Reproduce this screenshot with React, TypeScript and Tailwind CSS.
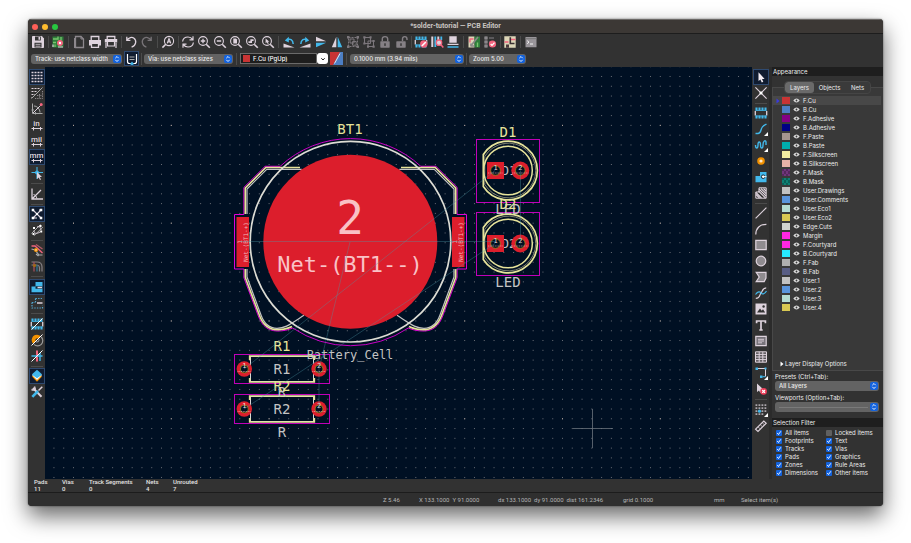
import { Fragment, type ReactNode } from "react";

const L = "#ded3dd";
const B = "#42b8eb";
const R = "#f2647e";
const O = "#f29100";

function Svg({ children }: { children: ReactNode }) {
  return (
    <svg viewBox="0 0 16 16" className="h-4 w-4 shrink-0" fill="none" stroke={L} strokeWidth="1" aria-hidden="true">
      {children}
    </svg>
  );
}

const lens = (
  <>
    <circle cx="7" cy="7" r="4.4" strokeWidth="1.1" />
    <path d="M10.2 10.2 13.8 13.8" strokeWidth="1.6" />
  </>
);

const footprint = (
  <>
    <path d="M2.3 6V10.5M13.7 6V10.5" strokeWidth="1.3" />
    <path d="M2.5 5.5H13.5M2.5 11H13.5" stroke={B} strokeWidth="0.8" />
    <path d="M3.5 2.6V5.6M6.5 2.6V5.6M9.5 2.6V5.6M12.5 2.6V5.6M3.5 10.6V13.6M6.5 10.6V13.6M9.5 10.6V13.6M12.5 10.6V13.6" stroke={B} strokeWidth="2.1" />
  </>
);

const corner = <path d="M15 11V15H11Z" fill="#fff" stroke="none" />;

const padlock = (
  <g fill="#858085" stroke="none">
    <rect x="3.3" y="7.3" width="9.4" height="6.4" rx="0.6" />
    <rect x="7.3" y="9.3" width="1.4" height="2.6" fill="#323232" />
  </g>
);

const icons: Record<string, ReactNode> = {
  save: (
    <>
      <path d="M2.5 2.5H11.8L13.5 4.2V13.5H2.5Z" fill={L} />
      <path d="M5 2.5H10.8V6.5H5ZM4.5 8.7H11.5V13.5H4.5Z" fill="#323232" stroke="none" />
      <path d="M8.5 3H10V5.8H8.5Z" fill={L} stroke="none" />
      <path d="M5.5 10.3H10.5M5.5 12.2H10.5" strokeWidth="0.8" />
    </>
  ),
  board: (
    <>
      <rect x="2.5" y="2.5" width="11" height="11" fill="#2f7d3b" stroke="none" />
      <path d="M3 5H8V2.5M3 8.5H6M5 13V10.5M11 3V6" stroke="#77c66e" strokeWidth="1.3" />
      <circle cx="10" cy="9" r="3" fill={R} stroke="none" />
      <circle cx="10" cy="9" r="1.2" fill="#fff" stroke="none" />
      <path d="M8 13H13M3 10.5V13" stroke={L} strokeWidth="1.2" />
    </>
  ),
  page: (
    <>
      <path d="M4.5 2.5H10L12.5 5V13.5H4.5Z" stroke="#8d888d" strokeWidth="1.3" />
      <path d="M10 2.5V5H12.5M3.5 4V14" stroke="#8d888d" />
    </>
  ),
  print: (
    <>
      <path d="M4.2 6V2.5H11.8V6" strokeWidth="1.3" />
      <path d="M2 6H14V11.5H2Z" fill={L} stroke="none" />
      <path d="M4.5 9.3H11.5V13.3H4.5Z" fill="#323232" strokeWidth="1.3" />
    </>
  ),
  plot: (
    <>
      <path d="M4.2 5V2.5H11.8V5" strokeWidth="1.3" />
      <path d="M1.8 5H14.2V8.5H1.8Z" fill={L} stroke="none" />
      <path d="M4.5 7.5H11.5V12H4.5Z" fill="#323232" strokeWidth="1.2" />
      <path d="M3 9V14M13 9V14" strokeWidth="1.2" />
    </>
  ),
  undo: <path d="M3.8 2.8V6.3H7.4M4 6.2C6 3.2 9 2.8 11 4.2C13.8 6.5 13.3 11.5 8.6 13.2" strokeWidth="1.3" />,
  redo: <path d="M12.2 2.8V6.3H8.6M12 6.2C10 3.2 7 2.8 5 4.2C2.2 6.5 2.7 11.5 7.4 13.2" strokeWidth="1.3" stroke="#777377" />,
  find: (
    <>
      <circle cx="9" cy="7" r="4.6" strokeWidth="1.1" />
      <path d="M5.8 10.2 2.4 13.6" strokeWidth="1.6" />
      <path d="M7.2 9.4 9 4.6 10.8 9.4M7.8 7.9H10.2" strokeWidth="1.2" />
    </>
  ),
  refresh: <path d="M2.6 7.5C3 4.5 5.5 3 8 3C10 3 11.6 3.9 12.6 5.4M13 2.2V5.8H9.5M13.4 8.5C13 11.5 10.5 13 8 13C6 13 4.4 12.1 3.4 10.6M3 13.8V10.2H6.5" strokeWidth="1.2" />,
  zoomIn: (
    <>
      {lens}
      <path d="M4.8 7H9.2M7 4.8V9.2" strokeWidth="1.3" />
    </>
  ),
  zoomOut: (
    <>
      {lens}
      <path d="M4.8 7H9.2" strokeWidth="1.3" />
    </>
  ),
  zoomPage: (
    <>
      {lens}
      <path d="M5.3 4.5H8L9 5.5V9.5H5.3Z" fill={L} stroke="none" />
    </>
  ),
  zoomObjects: (
    <>
      {lens}
      <path d="M4.5 8.2H7.2V6.2H9.6" strokeWidth="1.7" />
    </>
  ),
  zoomArea: (
    <>
      {lens}
      <path d="M5.6 4.4V9.2L6.8 8.2 7.8 10 8.8 9.4 7.8 7.8H9.4Z" fill={L} stroke="none" />
    </>
  ),
  rotateLeft: (
    <>
      <path d="M2.5 9.5 13.5 13.5H2.5Z" fill={L} stroke="none" />
      <path d="M6 5.8C9 4.2 12 5.8 12.2 10" stroke={B} strokeWidth="1.5" />
      <path d="M7.8 2.8V8.4L3.8 6.4Z" fill={B} stroke="none" />
    </>
  ),
  rotateRight: (
    <>
      <path d="M13.5 9.5 2.5 13.5H13.5Z" fill={L} stroke="none" />
      <path d="M10 5.8C7 4.2 4 5.8 3.8 10" stroke={B} strokeWidth="1.5" />
      <path d="M8.2 2.8V8.4L12.2 6.4Z" fill={B} stroke="none" />
    </>
  ),
  flipVertical: (
    <>
      <path d="M3 2.8 13.2 7.2H3Z" fill={L} stroke="none" />
      <path d="M3 13.2 13.2 8.8H3Z" fill={B} stroke="none" />
    </>
  ),
  mirror: (
    <>
      <path d="M7.3 2.8V13.3H2.8Z" fill={L} stroke="none" />
      <path d="M8.7 2.8V13.3H13.2Z" fill={B} stroke="none" />
    </>
  ),
  group: (
    <g stroke="#7c777c">
      <path d="M3.5 3.5H12.5V12.5H3.5Z" strokeDasharray="2 1" />
      <path d="M5 5H9V9H5ZM7.5 7.5H11.2V11.2H7.5Z" />
      <path d="M2 2H4.5V4.5H2ZM11.5 2H14V4.5H11.5ZM2 11.5H4.5V14H2ZM11.5 11.5H14V14H11.5Z" fill="#7c777c" stroke="none" />
    </g>
  ),
  ungroup: (
    <g stroke="#7c777c">
      <path d="M3.5 3.5H9.5V9.5H3.5ZM7 7H12.5V12.5H7Z" />
      <path d="M2.3 2.3H4.5V4.5H2.3ZM8.5 2.3H10.6V4.5H8.5ZM2.3 8.5H4.5V10.6H2.3ZM11.5 11.5H13.7V13.7H11.5ZM11.5 6H13.7V8H11.5ZM6 11.5H8V13.7H6Z" fill="#7c777c" stroke="none" />
    </g>
  ),
  lock: (
    <>
      {padlock}
      <path d="M5.3 7.3V5C5.3 1.8 10.7 1.8 10.7 5V7.3" stroke="#858085" strokeWidth="1.4" />
    </>
  ),
  unlock: (
    <>
      {padlock}
      <path d="M9.5 7.3V5C9.5 1.8 14 1.8 14 5V6" stroke="#858085" strokeWidth="1.4" />
    </>
  ),
  footprintEditor: (
    <>
      {footprint}
      <circle cx="10.8" cy="10" r="3.7" fill={R} stroke="none" />
      <path d="M8.8 12 12.8 8" stroke="#fff" strokeWidth="1.6" />
    </>
  ),
  footprintBrowser: (
    <>
      <path d="M3.3 2.5V13M9.3 2.5V6" strokeWidth="2" />
      <path d="M6.3 2.5V13M12.3 2.5V6" stroke={B} strokeWidth="1.8" />
      <circle cx="10" cy="8.7" r="2.7" stroke={R} strokeWidth="1.3" fill={L} />
      <path d="M12 10.8 14.3 13.5" stroke={R} strokeWidth="1.6" />
    </>
  ),
  update: (
    <>
      <path d="M4.3 2.3H11.7V8.7H4.3Z" fill={L} stroke="none" />
      <path d="M2.5 10.3H13.5" strokeWidth="1.3" />
      <path d="M2.5 13H13.5" stroke={B} strokeWidth="1.6" />
    </>
  ),
  updatePcb: (
    <>
      <path d="M2.5 2.5H8.5V13.5H2.5Z" fill="#dcd6b8" stroke="none" />
      <path d="M8.5 2.5H14V13.5H8.5Z" fill="#2f7d3b" stroke="none" />
      <path d="M4 5H7.5M4 4.5V8.5" stroke={R} strokeWidth="1.4" />
      <path d="M12 3 5.5 11M5 12.5V9.5M5 12H8.5" stroke="#888" strokeWidth="1.7" />
      <path d="M11.5 8.5V13" stroke="#77c66e" strokeWidth="1.4" />
    </>
  ),
  drc: (
    <>
      <path d="M3 3H5V5H3ZM3 7H5V9H3ZM3 11H5V13H3Z" stroke="#a5a0a5" strokeWidth="1.1" />
      <path d="M7 4H12M7 8H9" stroke="#858085" />
      <circle cx="10.5" cy="10" r="3.6" fill={R} stroke="none" />
      <path d="M8.7 10 10 11.4 12.5 8.6" stroke="#fff" strokeWidth="1.3" />
    </>
  ),
  schematic: (
    <>
      <path d="M2.3 2.3H13.7V13.7H2.3Z" fill="#dcd6b8" stroke="none" />
      <path d="M2.5 8H6.5M8.5 5.5H13.5" stroke={R} strokeWidth="1.4" />
      <path d="M8.3 3.2V9.5H12.5" stroke="#3a3032" strokeWidth="1.6" />
      <path d="M4 10.5H7V13.7H4Z" fill="#4a3a3c" stroke="none" />
    </>
  ),
  console: (
    <>
      <path d="M2.5 3H13.5V13.2H2.5Z" fill="#99959a" stroke="none" />
      <path d="M2.5 4.7H13.5" stroke="#777" />
      <path d="M4.2 6.7 6 8.2 4.2 9.7M7 10H10" stroke="#fff" strokeWidth="0.9" />
    </>
  ),
  grid: <path d="M2.5 3.5H14M2.5 6.5H14M2.5 9.5H14M2.5 12.5H14" strokeDasharray="2 1" strokeWidth="1.3" />,
  gridOverrides: (
    <>
      <path d="M2.5 3.5H11M2.5 6.5H8.5M2.5 9.5H6M2.5 12.5H4" strokeDasharray="2 1" strokeWidth="1.2" />
      <path d="M2.5 13.5 13.5 2.5" stroke="#aaa" />
      <path d="M13.5 6V13.5H6M10.5 9V13M8 10.5H13" stroke="#8d888d" strokeDasharray="1.3 1" />
    </>
  ),
  polar: (
    <>
      <path d="M3.5 2.5V12.5H13.5M2.5 9H5M6.5 11V13.5" stroke="#aaa" />
      <path d="M4 12 12 4" stroke={L} />
      <path d="M5 5C8 5 11 8 11 11.5" stroke="#aaa" />
      <circle cx="12.2" cy="3.6" r="1.5" fill={R} stroke="none" />
    </>
  ),
  crosshair: (
    <>
      <path d="M8 2V14M2.5 7.5H14" stroke={B} strokeWidth="1.1" />
      <circle cx="8" cy="7.5" r="2" fill={B} stroke="none" />
      <path d="M8 7V14L9.7 12.4 11 15 12 14.4 10.8 12H13Z" fill={L} stroke="none" />
    </>
  ),
  angle: (
    <>
      <path d="M3 2.5V13H14M3 13 12 4" strokeWidth="1.3" />
      <path d="M4.5 8.5C6.5 9 7.5 10.5 7.8 12.5" />
    </>
  ),
  ratsnest: (
    <>
      <path d="M4 4 12 12M4 12 12 4M4 12H8M10 4H12" strokeWidth="1.1" />
      <path d="M2.7 2.7H5.2V5.2H2.7ZM10.8 2.7H13.3V5.2H10.8ZM2.7 10.8H5.2V13.3H2.7ZM10.8 10.8H13.3V13.3H10.8ZM7 7H9V9H7Z" fill="#fff" stroke="none" />
    </>
  ),
  ratsnestCurved: (
    <>
      <path d="M2.5 11.5 11.5 2.5M5 13.8 13.8 5" stroke="#aaa" />
      <path d="M5 8.5C5 12 8 12 11 10M8 5C11 4 12 6 12 8" />
      <path d="M4 5H6V7H4ZM3.5 11H5.5V13H3.5ZM11.2 8.5H13.2V10.5H11.2ZM10.5 3H12.5V5H10.5Z" fill="#fff" stroke="none" />
    </>
  ),
  netHighlight: (
    <>
      <path d="M2.5 4H6L13.5 11" stroke={R} strokeWidth="1.4" />
      <path d="M7 2.5 13.5 7" stroke="#b85a68" strokeWidth="1.2" />
      <path d="M2.5 7 6 8 10 13H13.5M7 12 9.5 14" stroke="#aaa" strokeWidth="1.2" />
      <circle cx="7" cy="8" r="2" fill={O} stroke="none" />
      <circle cx="7" cy="8" r="0.7" fill="#fff" stroke="none" />
    </>
  ),
  netColor: (
    <>
      <path d="M2.5 4H8C11 4 13 6 13 9V13.5M2.5 7H7C9 7 10.5 8 10.5 10V13.5" stroke="#858085" strokeWidth="1.2" />
      <path d="M5 4V13.5" stroke="#a2505c" strokeWidth="1.3" />
      <path d="M8 7V13.5" stroke="#2f7590" strokeWidth="1.3" />
      <circle cx="5.5" cy="7.5" r="1.6" fill="#a46a15" stroke="none" />
    </>
  ),
  zoneFill: (
    <>
      <path d="M6.5 3H13.5V13.3H2.5V7.5H6.5Z" fill={B} stroke="none" />
      <path d="M6.5 8.5H13.5" stroke="#10283c" strokeWidth="2.4" />
      <path d="M8.5 8.5H13" stroke={L} strokeWidth="1.4" />
    </>
  ),
  zoneOutline: (
    <>
      <path d="M6.5 3.5H13M3 7.5H6.5M3 7.5V13H13.5V10.5M6.5 3.5V7" stroke="#52a6cf" strokeWidth="1.2" strokeDasharray="1.4 1.2" />
      <path d="M8 8H13.5" stroke={L} strokeWidth="1.6" />
    </>
  ),
  fpOutline: (
    <>
      {footprint}
      <path d="M2.5 13.5 13.5 2.5" stroke="#fff" />
    </>
  ),
  padOutline: (
    <>
      <path d="M8 2.8A5.2 5.2 0 0 0 4.3 11.7L6.8 9.2A1.7 1.7 0 0 1 9.2 6.8L11.7 4.3A5.2 5.2 0 0 0 8 2.8Z" fill={O} stroke="none" />
      <path d="M12.2 5A5 5 0 0 1 5 12.4M9.8 7.2A2 2 0 0 1 7.2 9.8" stroke="#999" strokeWidth="1.2" />
      <path d="M2.5 13.5 13.5 2.5" stroke="#fff" />
    </>
  ),
  trackOutline: (
    <>
      <path d="M8 2.5V13.5" stroke={R} strokeWidth="2" />
      <path d="M2.5 8H13.5M11 5V13" stroke={B} strokeWidth="1.4" />
      <path d="M2.5 13.5 13.5 2.5" stroke="#fff" />
    </>
  ),
  layers: (
    <>
      <path d="M3 8.5 8 13.8 13 8.5 8 5Z" fill={O} stroke="none" />
      <path d="M3 7 8 12 13 7 8 4Z" fill="#fff" stroke="none" />
      <path d="M3.3 6 8 1.8 12.7 6V7L8 10.2 3.3 7Z" fill={B} stroke="none" />
    </>
  ),
  tools: (
    <>
      <path d="M4 4 12.5 12.8" strokeWidth="2" />
      <path d="M2.5 5.5C5.5 7 7 5.5 5.5 2.5" strokeWidth="1.5" />
      <path d="M13.3 2.7 9.5 6.5" strokeWidth="1.5" />
      <path d="M9 7 3.3 12.8" stroke={B} strokeWidth="2.6" />
    </>
  ),
  select: <path d="M5.5 3.2V12L7.4 10.4 8.8 13.4 10.3 12.7 9 9.9H11.6Z" fill="#f3edf3" stroke="none" />,
  localRats: (
    <>
      <path d="M2.4 2.4 13.6 13.6M2.4 13.6 13.6 2.4" strokeWidth="1.2" />
      <rect x="6.6" y="6.6" width="2.8" height="2.8" fill="#fff" stroke="none" />
    </>
  ),
  footprint,
  route: (
    <>
      <path d="M2.5 12.5H5C8 12.5 7.5 9 9 6.5C10 4.5 11.5 4.5 13.5 3" stroke={B} strokeWidth="1.4" />
      {corner}
    </>
  ),
  tune: (
    <>
      <path d="M2.5 8C2.5 12 5 12 5 8S7.5 4 7.5 8 10 12 10 8 12.5 2.5 13 5V8" stroke={B} strokeWidth="1.4" />
      {corner}
    </>
  ),
  via: <circle cx="8" cy="8" r="2.7" stroke={O} strokeWidth="2.2" fill="#ffe9cc" />,
  zone: (
    <>
      <path d="M7 3H13.5V13.3H2.5V7H7Z" fill={B} stroke="none" />
      <circle cx="10.2" cy="7.7" r="1.8" fill="#fff" stroke="#1d2a33" />
      <path d="M11 7.7H13.5" stroke="#fff" />
    </>
  ),
  ruleArea: (
    <>
      <path d="M6 2.8H13.2V13.2H2.8V7H6Z" />
      <path d="M3 9.5 6.5 13M3 7.5 8.5 13M5.5 6 12.5 13M6 4 13 11M8 3.5 13 8.5M10.5 3.5 13 6" strokeWidth="1.1" />
    </>
  ),
  line: <path d="M2.6 13.4 13.4 2.6" strokeWidth="1.2" />,
  arc: <path d="M2.8 13.4C2.8 7 7 3.3 13.4 3.3" strokeWidth="1.2" />,
  rect: <path d="M2.8 3.3H13.2V12.7H2.8Z" fill="#8f8b8f" strokeWidth="1.2" />,
  circle: <circle cx="8" cy="8" r="4.8" fill="#8f8b8f" strokeWidth="1.2" />,
  polygon: <path d="M3.2 3.3H13V9L11.2 12.6H3.2L6.2 8Z" fill="#8f8b8f" strokeWidth="1.2" />,
  bezier: (
    <>
      <path d="M2.8 13.3C7.5 13.3 6.5 9 8 8S9 2.8 13.2 2.8" strokeWidth="1.2" />
      <path d="M2.5 9.5C5 6 7 6.5 8 8S11.5 9.5 13.5 6" stroke={B} strokeWidth="1.2" />
    </>
  ),
  image: (
    <>
      <path d="M2.5 2.5H13.5V13.5H2.5Z" fill={L} stroke="none" />
      <path d="M4 11.5 7 7.5 8.7 9.7 10 8.3 12.2 11.5Z" fill="#323232" stroke="none" />
      <circle cx="10.6" cy="5.5" r="1.2" fill="#323232" stroke="none" />
    </>
  ),
  text: <path d="M3.3 4H12.7M8 4V13.5M3.6 3.2V6.2M12.4 3.2V6.2M6.3 13H9.7" strokeWidth="1.7" />,
  textbox: (
    <>
      <path d="M2.8 3.3H13.2V12.7H2.8Z" fill="#77737a" strokeWidth="1.2" />
      <path d="M5 6.3H11M5 8H11M5 9.8H9" strokeWidth="0.9" />
    </>
  ),
  table: <path d="M2.5 2.8H13.5V13.2H2.5ZM2.5 5.4H13.5M2.5 8H13.5M2.5 10.6H13.5M6.2 2.8V13.2M9.8 2.8V13.2" fill="#5a575a" strokeWidth="1" />,
  dimension: (
    <>
      <path d="M3.5 3.5H12.5V11.5M3.5 3.5V5" strokeWidth="1" />
      <path d="M2.5 2.5H5V5H2.5ZM7 10.5H9.5V13H7ZM11.5 2.5H13.5V4.5H11.5Z" fill={B} stroke="none" />
      <path d="M9.5 11.7H12.5" stroke={B} />
      {corner}
    </>
  ),
  delete: (
    <>
      <path d="M4 2.5V11L6 9.5 7.5 12.3 8.5 8.5H10.5Z" fill={L} stroke="none" />
      <circle cx="10.6" cy="10.4" r="3.3" fill="#ed3b57" stroke="none" />
      <path d="M9.2 9 12 11.8M12 9 9.2 11.8" stroke="#fff" strokeWidth="1.2" />
    </>
  ),
  gridOrigin: (
    <>
      <path d="M2.5 3.2H14M2.5 6.2H14M2.5 9.2H14M2.5 12.2H11" strokeWidth="1.8" strokeDasharray="1.8 1.2" stroke="#aba5ab" />
      <circle cx="6.5" cy="9.2" r="1.6" fill={B} stroke="none" />
      {corner}
    </>
  ),
  ruler: (
    <>
      <path d="M2.6 11.2 10.8 3 13.2 5.2 5 13.4Z" strokeWidth="1.2" />
      <path d="M5.2 9 6.7 10.4M7.4 6.8 8.8 8.2M9.4 4.8 10.8 6.2" strokeWidth="0.9" />
    </>
  ),
};

// "|" is a narrow divider, "||" a one pixel wider one
const topTools = "save | board || page print plot | undo redo || find | refresh zoomIn zoomOut zoomPage zoomObjects zoomArea || rotateLeft rotateRight flipVertical mirror group ungroup lock unlock | footprintEditor footprintBrowser update || updatePcb drc | schematic || console".split(" ");
const leftTools = "grid gridOverrides polar unit-in unit-mil unit-mm crosshair || angle | ratsnest ratsnestCurved | netHighlight netColor || zoneFill zoneOutline || fpOutline padOutline trackOutline | layers tools".split(" ");
const rightTools = "select localRats | footprint route tune via zone ruleArea | line arc rect circle polygon bezier image text textbox table dimension delete || gridOrigin ruler".split(" ");
const active = new Set(["grid", "unit-mm", "ratsnest", "zoneFill", "layers", "select"]);

function Tool({ name }: { name: string }) {
  const unit = name.startsWith("unit-") ? name.slice(5) : null;
  return (
    <button
      type="button"
      aria-label={name}
      className={`flex h-4 w-4 shrink-0 items-center justify-center ${active.has(name) ? "bg-[#101c30] outline outline-1 -outline-offset-1 outline-[#2f4a70]" : ""}`}
    >
      {unit ? (
        <span className="flex flex-col items-center text-[8px] leading-[7px] font-medium text-[#ded3dd]">
          {unit}
          <svg viewBox="0 0 12 4" className="h-1 w-3" stroke={L} fill="none" aria-hidden="true">
            <path d="M0.5 1.5H11.5M2.5 0V3.5M9.5 0V3.5" />
          </svg>
        </span>
      ) : (
        <Svg>{icons[name]}</Svg>
      )}
    </button>
  );
}

function VTools({ items }: { items: string[] }) {
  return (
    <>
      {items.map((t, i) =>
        t[0] === "|" ? (
          <div key={i} className={`flex w-full shrink-0 items-center justify-center ${t === "|" ? "h-1" : "h-[5px]"}`}>
            <div className="h-px w-3 bg-[#4b4b4b]" />
          </div>
        ) : (
          <Tool key={i} name={t} />
        ),
      )}
    </>
  );
}

function VLine({ wide }: { wide?: boolean }) {
  return <div className={`h-3 w-px shrink-0 bg-[#4b4b4b] ${wide ? "mx-[3px]" : "mx-[2px]"}`} />;
}

function Select({ label, value, width, id }: { label?: string; value: string; width: string; id?: string }) {
  return (
    <div className={`relative h-[10px] shrink-0 ${width}`}>
      <select
        id={id}
        aria-label={label}
        className="block h-full w-full appearance-none rounded-[3px] bg-[#636363] px-1 font-['Inter',sans-serif] text-[6px] leading-[10px] font-medium text-[#ececec]"
      >
        <option>{value}</option>
      </select>
      {!value && <div className="pointer-events-none absolute top-[5px] right-[11px] left-1 h-px bg-[#7a7a7a]" />}
      <svg viewBox="0 0 8 8" className="pointer-events-none absolute top-px right-px h-2 w-2" aria-hidden="true">
        <rect width="8" height="8" rx="2" fill="#1463dd" />
        <path d="M2.3 3.2 4 1.5 5.7 3.2M2.3 4.8 4 6.5 5.7 4.8" fill="none" stroke="#fff" strokeWidth="0.9" />
      </svg>
    </div>
  );
}

const layers: [string, string][] = [
  ["F.Cu", "#c83434"],
  ["B.Cu", "#4d7fc4"],
  ["F.Adhesive", "#840084"],
  ["B.Adhesive", "#000084"],
  ["F.Paste", "#a5958f"],
  ["B.Paste", "#00adad"],
  ["F.Silkscreen", "#f2eda1"],
  ["B.Silkscreen", "#e8b2a7"],
  ["F.Mask", "#70367b"],
  ["B.Mask", "#0e8074"],
  ["User.Drawings", "#c2c2c2"],
  ["User.Comments", "#5994dc"],
  ["User.Eco1", "#b4dbd2"],
  ["User.Eco2", "#d8c852"],
  ["Edge.Cuts", "#d0d2cd"],
  ["Margin", "#ff26e2"],
  ["F.Courtyard", "#ff26e2"],
  ["B.Courtyard", "#26e9ff"],
  ["F.Fab", "#afafaf"],
  ["B.Fab", "#585d84"],
  ["User.1", "#c2c2c2"],
  ["User.2", "#5994dc"],
  ["User.3", "#b4dbd2"],
  ["User.4", "#d8c852"],
];

const filters: [string, boolean][] = [
  ["All items", true],
  ["Locked items", false],
  ["Footprints", true],
  ["Text", true],
  ["Tracks", true],
  ["Vias", true],
  ["Pads", true],
  ["Graphics", true],
  ["Zones", true],
  ["Rule Areas", true],
  ["Dimensions", true],
  ["Other items", true],
];

const info: [string, string, string][] = [
  ["Pads", "11", "w-7"],
  ["Vias", "0", "w-[27px]"],
  ["Track Segments", "0", "w-[57px]"],
  ["Nets", "4", "w-[27px]"],
  ["Unrouted", "7", "w-10"],
];

const STEP = 9.78;
const SILK = "#e6e39a";
const FAB = "#c4c4c4";
const CRTYD = "#c000b8";
const COPPER = "#dc1e2c";

function GridDots() {
  const rows = Array.from({ length: 43 }, (_, i) => 66.7 + i * STEP);
  return (
    <g>
      {rows.map((y, i) => (
        <Fragment key={i}>
          <path d={`M43.66 ${y}H752`} stroke="#6a6f77" strokeDasharray={`1 ${STEP - 1}`} />
          {i % 10 === 6 && <path d={`M73 ${y}H752`} stroke="#b9a9a0" strokeDasharray={`1 ${STEP * 10 - 1}`} />}
        </Fragment>
      ))}
    </g>
  );
}

function Pad({ x, y, n, r, hole, square }: { x: number; y: number; n: string; r: number; hole: number; square?: boolean }) {
  return (
    <g>
      {square ? <rect x={x - r} y={y - r} width={r * 2} height={r * 2} fill={COPPER} /> : <circle cx={x} cy={y} r={r} fill={COPPER} />}
      <circle cx={x} cy={y} r={hole} fill="#001023" stroke="#a08a20" strokeWidth="0.8" />
      <path d={`M${x - r + 1} ${y + 2.5}H${x + r - 1}`} stroke="#e8a9ad" strokeWidth="1" strokeDasharray="1 0.7" opacity="0.7" />
      <text x={x} y={y - 1} fontSize="7" fill="#f1dcdc" textAnchor="middle">
        {n}
      </text>
    </g>
  );
}

function Led({ y, name }: { y: number; name: string }) {
  return (
    <g fill="none">
      <rect x="476.5" y={y - 31} width="63" height="63" stroke={CRTYD} />
      <path d={`M483.3 ${y - 16}A29.4 29.4 0 1 1 483.3 ${y + 16}Z`} stroke={SILK} strokeWidth="1.7" />
      <path d={`M484.8 ${y - 14}A27.4 27.4 0 1 1 484.8 ${y + 14}Z`} stroke="#9c9c82" strokeWidth="0.8" />
      <circle cx="508" cy={y} r="24.3" stroke={SILK} strokeWidth="1.5" />
      <text x="509" y={y + 4} fontSize="12" fill={FAB} textAnchor="middle">
        {name}
      </text>
      <Pad x={495.5} y={y} n="1" r={8.5} hole={4.8} square />
      <Pad x={520.3} y={y} n="2" r={9} hole={4.8} />
    </g>
  );
}

function Resistor({ y, name }: { y: number; name: string }) {
  return (
    <g fill="none">
      <rect x="234.5" y={y - 14.5} width="95" height="29" stroke={CRTYD} />
      <rect x="250.5" y={y - 12.5} width="63" height="25" stroke="#d6d6d6" />
      <path d={`M249.7 ${y - 9}V${y - 13}H314.3V${y - 9}M249.7 ${y + 9}V${y + 13}H314.3V${y + 9}`} stroke={SILK} strokeWidth="1.7" />
      <text x="282" y={y + 5} fontSize="14" fill={FAB} textAnchor="middle">
        {name}
      </text>
      <Pad x={244.3} y={y} n="1" r={7.7} hole={4} />
      <Pad x={319} y={y} n="2" r={7.7} hole={4} />
    </g>
  );
}

function BatterySide() {
  return (
    <g fill="none" strokeLinejoin="round">
      <path d="M280 166.3H265.1L243.9 187.4V214.5H234.5V269H243.9V277.7L258.3 316C262 326 268 330.7 277 331C284 331 288 330 292.7 328" stroke="#e000d8" />
      <path d="M301.7 169.3H266.7L247 189V214M247 269V277L261 315C264 323.5 270 328.2 277 328.3C285 328.3 289 325 304 315.3" stroke="#c4c4c4" strokeWidth="1.2" />
      <path d="M300 167.5H265.8L245.3 188V214M245.3 269V277.5L259.5 315.5C263 325 269 329.5 277 329.7C284 329.8 288 328.5 292 326.5" stroke={SILK} strokeWidth="1.6" />
      <rect x="236.5" y="217" width="12.5" height="50" fill={COPPER} />
    </g>
  );
}

function PadLabel({ x }: { x: number }) {
  return (
    <g transform={`translate(${x} 242) rotate(-90)`} fill="#f4b4b8" textAnchor="middle" fontSize="6">
      <text y="0">1</text>
      <text y="6">Net-(BT1-+)</text>
    </g>
  );
}

function Board() {
  return (
    <svg
      viewBox="45 67 707 412"
      preserveAspectRatio="xMidYMid slice"
      className="block h-full w-full bg-[#001023] font-['DejaVu_Sans_Mono',monospace]"
      role="img"
      aria-label="Board"
    >
      <GridDots />
      <BatterySide />
      <g transform="translate(701 0) scale(-1 1)">
        <BatterySide />
      </g>
      <path d="M280 166.5A103 103 0 0 1 421 166.5M292.7 328A103 103 0 0 0 408.3 328" stroke="#c800c4" fill="none" />
      <circle cx="350.5" cy="241.7" r="100.3" fill="none" stroke="#dcdcd4" strokeWidth="1.7" />
      <circle cx="350.3" cy="241.7" r="87" fill={COPPER} />
      <text x="350" y="234" fontSize="46" fill="#f9c2c6" textAnchor="middle">
        2
      </text>
      <text x="350" y="272" fontSize="22" fill="#f9c2c6" textAnchor="middle">
        Net-(BT1--)
      </text>
      <PadLabel x={242} />
      <PadLabel x={457} />
      <Resistor y={369} name="R1" />
      <Resistor y={409} name="R2" />
      <Led y={170.5} name="D1" />
      <Led y={243.5} name="D2" />
      <g textAnchor="middle" fontSize="14">
        <g fill={FAB}>
          <text x="350" y="359" fontSize="12">Battery_Cell</text>
          <text x="282" y="397">R</text>
          <text x="282" y="437">R</text>
          <text x="508" y="214">LED</text>
          <text x="508" y="287">LED</text>
        </g>
        <g fill={SILK}>
          <text x="350" y="134">BT1</text>
          <text x="508" y="137">D1</text>
          <text x="508" y="209">D2</text>
          <text x="282" y="351">R1</text>
          <text x="282" y="391">R2</text>
        </g>
      </g>
      <g fill="none" strokeWidth="0.8">
        <path d="M244 369 495 170.5M244 409 495 243.5M319 369 350 242M319 369V409M520.5 170.5V243.5M240 241.5H495" stroke="#4b99a8" opacity="0.45" />
        <path d="M573 428.5H613M592.5 409V448" stroke="#6b737c" />
      </g>
    </svg>
  );
}

function Appearance() {
  return (
    <aside className="flex w-[111px] shrink-0 flex-col bg-[#323232] font-['Inter',sans-serif] text-[6px] text-[#ececec]">
      <h2 className="h-[9px] shrink-0 bg-[#1e1e1e] px-px leading-[9px]">Appearance</h2>
      <div className="relative mt-[11px] flex min-h-0 flex-1 flex-col border-t border-b border-l border-[#484848] bg-[#393939] pt-2">
        <div role="tablist" className="absolute -top-[6px] left-3 flex h-[11px] rounded-[3px] bg-[#3a3a3a] leading-[11px] outline outline-1 outline-[#454545]">
          <button type="button" role="tab" aria-selected="true" className="w-[29px] rounded-[3px] bg-[#6a6a6a]">Layers</button>
          <button type="button" role="tab" aria-selected="false" className="w-[31px]">Objects</button>
          <button type="button" role="tab" aria-selected="false" className="w-[25px]">Nets</button>
        </div>
        <ul>
          {layers.map(([name, color], i) => (
            <li key={name} className={`mr-[2px] flex h-[9px] items-center pl-[3px] leading-[9px] ${i === 0 ? "bg-[#484848]" : ""}`}>
              <svg viewBox="0 0 4 6" className="mr-[2px] h-[6px] w-1" aria-hidden="true">
                {i === 0 && <path d="M0.5 0.5 3.5 3 0.5 5.5Z" fill="#3a3ae0" />}
              </svg>
              <svg viewBox="0 0 8 7" className="h-[7px] w-2" aria-hidden="true">
                <rect width="8" height="7" fill={color} />
                {name.endsWith("Mask") && <path d="M0 0H2V2H0ZM4 0H6V2H4ZM2 2H4V5H2ZM6 2H8V5H6ZM0 5H2V7H0ZM4 5H6V7H4Z" fill="#000" opacity="0.25" />}
              </svg>
              <svg viewBox="0 0 7 5" className="mx-[3px] h-[5px] w-[7px]" aria-hidden="true">
                <path d="M0.3 2.5Q3.5 -1.4 6.7 2.5Q3.5 6.4 0.3 2.5Z" fill="#dcdcdc" />
                <circle cx="3.5" cy="2.5" r="0.9" fill="#393939" />
              </svg>
              <span>{name}</span>
            </li>
          ))}
        </ul>
        <button type="button" className="mt-auto mb-[2px] flex items-center gap-px pl-[7px] leading-[9px]">
          <svg viewBox="0 0 4 6" className="h-[6px] w-1" aria-hidden="true">
            <path d="M0.5 0.5 3.5 3 0.5 5.5Z" fill="#fff" />
          </svg>
          Layer Display Options
        </button>
      </div>
      <div className="flex shrink-0 flex-col pr-1 pl-[3px] leading-[9px]">
        <label htmlFor="presets" className="pt-px">Presets (Ctrl+Tab):</label>
        <Select id="presets" value="All Layers" width="w-full" />
        <label htmlFor="viewports" className="pt-[2px]">Viewports (Option+Tab):</label>
        <Select id="viewports" value="" width="w-full" />
      </div>
      <h2 className="mt-[6px] h-[9px] shrink-0 bg-[#1e1e1e] px-px leading-[9px]">Selection Filter</h2>
      <div className="mb-[2px] grid shrink-0 grid-cols-[50px_1fr] pt-[2px] pl-1">
        {filters.map(([name, on]) => (
          <label key={name} className="flex h-2 items-center gap-[3px] leading-2 whitespace-nowrap">
            <span className="relative block h-[6px] w-[6px]">
              <input type="checkbox" defaultChecked={on} className="peer block h-[6px] w-[6px] appearance-none rounded-[1px] bg-[#606060] checked:bg-[#1463dd]" />
              <svg viewBox="0 0 6 6" className="pointer-events-none absolute inset-0 hidden h-[6px] w-[6px] peer-checked:block" aria-hidden="true">
                <path d="M1.2 3 2.5 4.5 4.8 1.3" fill="none" stroke="#fff" strokeWidth="0.9" />
              </svg>
            </span>
            {name}
          </label>
        ))}
      </div>
    </aside>
  );
}

export default function App() {
  return (
    <div className="flex h-screen w-full bg-white px-7 pt-[19px] pb-[37px] font-['Roboto','Liberation_Sans',sans-serif]">
      <div className="flex min-w-0 flex-1 flex-col overflow-hidden rounded-[4px] bg-[#323232] shadow-[0_10px_22px_rgba(0,0,0,0.6),0_0_2px_rgba(0,0,0,0.6)]">
        <header className="relative flex h-[15px] shrink-0 items-center border-t border-b border-t-[#6b6866] border-b-[#1d1d1d] bg-[#3c3835]">
          <div className="flex gap-1 pl-1">
            <button type="button" aria-label="Close" className="h-[6px] w-[6px] rounded-full bg-[#ff5f57]" />
            <button type="button" aria-label="Minimize" className="h-[6px] w-[6px] rounded-full bg-[#febc2e]" />
            <button type="button" aria-label="Zoom" className="h-[6px] w-[6px] rounded-full bg-[#28c840]" />
          </div>
          <h1 className="pointer-events-none absolute inset-x-0 text-center text-[7px] leading-[13px] font-bold text-[#c9c5c2]">*solder-tutorial — PCB Editor</h1>
        </header>

        <div className="flex h-4 shrink-0 items-center pl-[2px]">
          {topTools.map((t, i) =>
            t[0] === "|" ? (
              <div key={i} className={`flex h-3 shrink-0 justify-center ${t === "|" ? "w-1" : "w-[5px]"}`}>
                <div className="h-3 w-px bg-[#4b4b4b]" />
              </div>
            ) : (
              <Tool key={i} name={t} />
            ),
          )}
        </div>

        <div className="flex h-[17px] shrink-0 items-center pl-[3px]">
          <Select label="Track width" value="Track: use netclass width" width="w-[91px]" />
          <button type="button" aria-label="Use existing track width" className="ml-[2px] flex h-[15px] w-[15px] items-center justify-center bg-[#101c30] outline outline-1 -outline-offset-1 outline-[#2f4a70]">
            <svg viewBox="0 0 14 14" className="h-[14px] w-[14px]" fill="none" stroke="#fff" aria-hidden="true">
              <path d="M2.5 2V9.5Q2.5 11.5 4.5 11.5H9.5Q11.5 11.5 11.5 9.5V2" strokeWidth="1.2" />
              <path d="M4.5 5H9.5M4.5 7.5H9.5" stroke="#aaa" />
              <path d="M7 9.5 9 12 7 13.5 5 12Z" fill={B} stroke="none" />
            </svg>
          </button>
          <VLine />
          <Select label="Via size" value="Via: use netclass sizes" width="w-[89px]" />
          <VLine wide />
          <button type="button" className="flex h-[11px] w-[77px] shrink-0 items-center gap-[3px] border border-[#6a6a6a] bg-[#1e1e1e] pl-[2px] font-['Inter',sans-serif] text-[6px] leading-[9px] font-medium text-white">
            <span className="h-[7px] w-[7px] bg-[#c83434]" />
            F.Cu (PgUp)
          </button>
          <button type="button" aria-label="Choose layer" className="flex h-[11px] w-[11px] items-center justify-center rounded-[3px] bg-white">
            <svg viewBox="0 0 6 6" className="h-[6px] w-[6px]" aria-hidden="true">
              <path d="M1.3 2.2 3 4 4.7 2.2" fill="none" stroke="#222" />
            </svg>
          </button>
          <button type="button" aria-label="Layer pair" className="ml-[2px] h-[13px] w-[13px]">
            <svg viewBox="0 0 13 13" className="h-[13px] w-[13px]" aria-hidden="true">
              <rect width="13" height="13" fill="#4d7fc4" />
              <path d="M0 0H10L3 13H0Z" fill="#c83434" />
              <path d="M10 1.5 4.5 11.5" stroke="#e8e8e8" />
            </svg>
          </button>
          <VLine wide />
          <Select label="Grid" value="0.1000 mm (3.94 mils)" width="w-[114px]" />
          <VLine />
          <Select label="Zoom" value="Zoom 5.00" width="w-[57px]" />
        </div>

        <div className="flex min-h-0 flex-1">
          <nav aria-label="Display tools" className="flex w-[17px] shrink-0 flex-col items-center pt-[2px]">
            <VTools items={leftTools} />
          </nav>
          <main className="min-w-0 flex-1 overflow-hidden">
            <Board />
          </main>
          <nav aria-label="Edit tools" className="flex w-[17px] shrink-0 flex-col items-center pt-[2px]">
            <VTools items={rightTools} />
          </nav>
          <div className="w-[3px] shrink-0 bg-[#2b2b2b]" />
          <Appearance />
        </div>

        <dl className="flex h-[13px] shrink-0 pl-[6px] text-[6px] leading-[6px] font-medium text-[#e4e4e4]">
          {info.map(([k, v, w]) => (
            <div key={k} className={`shrink-0 ${w}`}>
              <dt>{k}</dt>
              <dd className="leading-[7px]">{v}</dd>
            </div>
          ))}
        </dl>

        <footer className="flex h-[14px] shrink-0 items-center justify-end border-t border-[#1c1c1c] bg-[#2f2f2f] text-[6px] whitespace-pre text-[#b4b4b4]">
          <span className="w-9">Z 5.46</span>
          <span className="w-[79px]">X 133.1000  Y 91.0000</span>
          <span className="w-[125px]">dx 133.1000  dy 91.0000  dist 161.2346</span>
          <span className="w-[91px]">grid 0.1000</span>
          <span className="w-[27px]">mm</span>
          <span className="w-[142px]">Select item(s)</span>
        </footer>
      </div>
    </div>
  );
}
